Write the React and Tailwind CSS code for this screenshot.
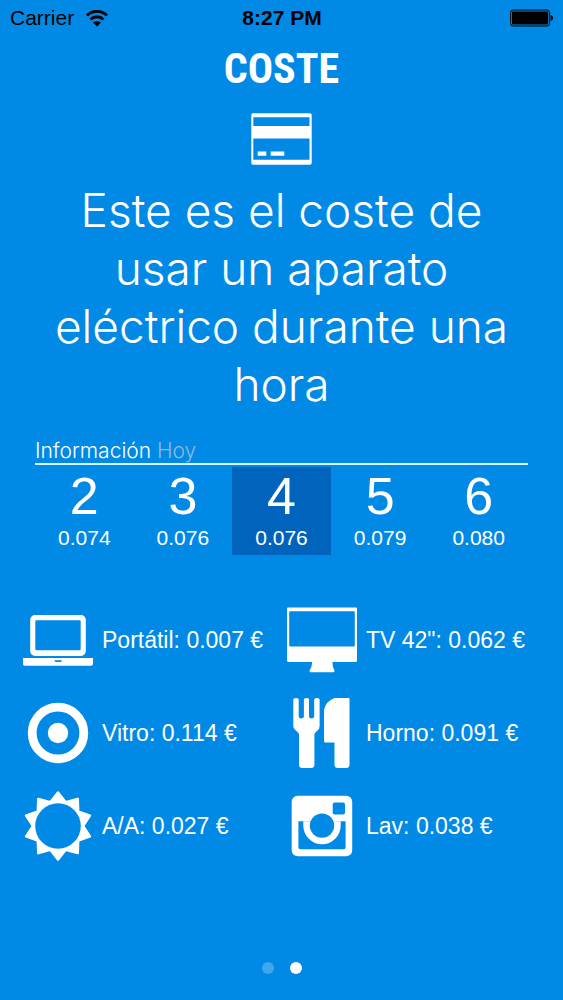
import React, { useState } from "react";

const hours = [
  { hour: 2, price: "0.074" },
  { hour: 3, price: "0.076" },
  { hour: 4, price: "0.076" },
  { hour: 5, price: "0.079" },
  { hour: 6, price: "0.080" },
];

const WifiIcon = () => (
  <svg width="22" height="17" viewBox="0 0 22 17" fill="none" stroke="black" strokeWidth="2.8" aria-hidden="true">
    <path d="M1 5.4a14.2 14.2 0 0 1 20 0" />
    <path d="M4.6 9.4a9 9 0 0 1 12.8 0" />
    <path d="M11 16.5 7 12.6a5.6 5.6 0 0 1 8 0z" fill="black" stroke="none" />
  </svg>
);

const BatteryIcon = () => (
  <svg width="44" height="18" viewBox="0 0 44 18" aria-hidden="true">
    <rect x="0.6" y="1" width="39" height="16" rx="2.5" fill="none" stroke="black" strokeWidth="1" />
    <rect x="2" y="2.5" width="36.2" height="13" rx="1" fill="black" />
    <path d="M40.6 6q2.6 0.6 2.6 3t-2.6 3z" fill="black" />
  </svg>
);

const CardIcon = () => (
  <svg width="61" height="52" viewBox="0 0 61 52" fill="white" aria-hidden="true">
    <path
      fillRule="evenodd"
      d="M2 0.3H59a1.7 1.7 0 0 1 1.7 1.7V50a1.7 1.7 0 0 1-1.7 1.7H2A1.7 1.7 0 0 1 0.3 50V2A1.7 1.7 0 0 1 2 0.3ZM2.3 4.3V13H58.5V4.3ZM2.3 25.6V46.8H58.5V25.6Z"
    />
    <path d="M6.7 38.5h8.6v4.2H6.7zM19.7 38.5h13.6v4.2H19.7z" />
  </svg>
);

// Appliance icons share one 70x70 canvas.
const Icon = ({ children }) => (
  <svg className="shrink-0" width="70" height="70" viewBox="0 0 70 70" fill="white" aria-hidden="true">
    {children}
  </svg>
);

const LaptopIcon = () => (
  <Icon>
    <path
      fillRule="evenodd"
      d="M12 10H58a4.8 4.8 0 0 1 4.8 4.8V46.2A4.8 4.8 0 0 1 58 51H12a4.8 4.8 0 0 1-4.8-4.8V14.8A4.8 4.8 0 0 1 12 10ZM13.5 15.3a1.2 1.2 0 0 0-1.2 1.2V44a1.2 1.2 0 0 0 1.2 1.2H56.5a1.2 1.2 0 0 0 1.2-1.2V16.5a1.2 1.2 0 0 0-1.2-1.2Z"
    />
    <path
      fillRule="evenodd"
      d="M0 53H70V59a1.8 1.8 0 0 1-1.8 1.8H1.8A1.8 1.8 0 0 1 0 59ZM31.5 55.2V56q0.4 1 1.6 1H37.2q1.2 0 1.6-1V55.2Z"
    />
  </Icon>
);

const TvIcon = () => (
  <Icon>
    <path
      fillRule="evenodd"
      d="M1 2.4H69a1 1 0 0 1 1 1V55.5A1.5 1.500 0 0 1 68.5 57H45.4Q45.400 62 47.400 65.2V66.200A1 1 0 0 1 46.4 67.200H23.600A1 1 0 0 1 22.600 66.200V65.200Q25 62 25.200 57H1.500A1.500 1.500 0 0 1 0 55.500V3.400A1 1 0 0 1 1 2.400ZM3.200 6.200a1 1 0 0 0-1 1V40.500a1 1 0 0 0 1 1H66.800a1 1 0 0 0 1-1V7.200a1 1 0 0 0-1-1Z"
    />
  </Icon>
);

const HobIcon = () => (
  <Icon>
    <circle cx="35" cy="35" r="25.8" fill="none" stroke="white" strokeWidth="8.8" />
    <circle cx="35" cy="35" r="10.2" />
  </Icon>
);

const CutleryIcon = () => (
  <Icon>
    <path d="M6.3 1.5Q6.3 0 9 0T11.7 1.5V18.5Q11.7 20.5 14.3 20.5T16.900 18.500V1.500Q16.900 0 19.500 0T22 1.500V18.500Q22 20.500 24.600 20.500T27.200 18.500V1.500Q27.200 0 29.900 0T32.600 1.500V28Q32.600 31 30.500 32.500T27.400 36V66.500A3.500 3.500 0 0 1 23.900 70H15.500A3.500 3.500 0 0 1 12 66.500V36Q10.800 33.800 8.500 32.200T6.300 28Z" />
    <path d="M47.5 0H61.500A1 1 0 0 1 62.500 1V66.500A3.500 3.500 0 0 1 59 70H51A3.500 3.500 0 0 1 47.500 66.500V44.500H38.500A1.500 1.500 0 0 1 37 43V12Q39 3 47.500 0Z" />
  </Icon>
);

// Ten rays: tips and valleys alternate every 18 degrees.
const sunPoints = Array.from({ length: 20 }, (_, i) => {
  const r = i % 2 === 0 ? 33.5 : 25;
  const a = (i * Math.PI) / 10;
  return `${(35 + r * Math.sin(a)).toFixed(1)},${(35 - r * Math.cos(a)).toFixed(1)}`;
}).join(" ");

const SunIcon = () => (
  <Icon>
    <polygon points={sunPoints} stroke="white" strokeWidth="2.5" strokeLinejoin="round" />
    <circle cx="35" cy="35" r="22.8" fill="#008ae6" />
  </Icon>
);

const WasherIcon = () => (
  <Icon>
    <rect x="4.7" y="4.7" width="60.5" height="60.5" rx="6" />
    <rect x="45.7" y="11.5" width="12.3" height="12" rx="2" fill="#008ae6" />
    <path d="M11.4 30.300H58.600V56.500A1.800 1.800 0 0 1 56.800 58.300H13.200A1.800 1.800 0 0 1 11.400 56.500Z" fill="#008ae6" />
    <path d="M16.3 30.200H53.700V34.600A18.700 18.700 0 0 1 16.300 34.600Z" />
    <circle cx="35" cy="34.6" r="12.2" fill="#008ae6" />
  </Icon>
);

const appliances = [
  { name: "Portátil", cost: "0.007 €", icon: LaptopIcon },
  { name: 'TV 42"', cost: "0.062 €", icon: TvIcon },
  { name: "Vitro", cost: "0.114 €", icon: HobIcon },
  { name: "Horno", cost: "0.091 €", icon: CutleryIcon },
  { name: "A/A", cost: "0.027 €", icon: SunIcon },
  { name: "Lav", cost: "0.038 €", icon: WasherIcon },
];

const StatusBar = () => (
  <div className="grid grid-cols-3 items-center h-9 pl-[10px] pr-[9px] text-[21px] leading-9 text-black">
    <div className="flex items-center gap-3">
      <span>Carrier</span>
      <WifiIcon />
    </div>
    <span className="text-center font-bold">8:27 PM</span>
    <div className="flex justify-end">
      <BatteryIcon />
    </div>
  </div>
);

const App = () => {
  const [selected, setSelected] = useState(4);
  const [page, setPage] = useState(1);

  return (
    <div className="flex flex-col min-h-screen bg-[#008ae6] text-white font-['Liberation_Sans',sans-serif]">
      <StatusBar />

      <header className="flex flex-col items-center px-9">
        <h1 className="mt-2 text-[42px] leading-[50px] font-bold font-['Liberation_Sans_Narrow','Roboto_Condensed',sans-serif]">
          COSTE
        </h1>
        <div className="mt-[19px]">
          <CardIcon />
        </div>
        <p className="mt-4 text-center text-[46px] leading-[58px] font-light font-['Inter',sans-serif]">
          Este es el coste de usar un aparato eléctrico durante una hora
        </p>
      </header>

      {/* Hourly price strip */}
      <section className="mt-6 px-[35px]">
        <h2 className="border-b-2 border-[#d9fbff] pt-[2px] text-[21px] leading-[24px] font-light font-['Inter',sans-serif]">
          Información <span className="text-[#8fb9dd]">Hoy</span>
        </h2>
        <div className="mt-[2px] grid grid-cols-5">
          {hours.map(({ hour, price }) => (
            <button
              key={hour}
              type="button"
              aria-pressed={selected === hour}
              onClick={() => setSelected(hour)}
              className={`flex flex-col items-center h-[88px] ${selected === hour ? "bg-[#0064bd]" : ""}`}
            >
              <span className="text-[52px] leading-[58px]">{hour}</span>
              <span className="text-[21px] leading-[26px]">{price}</span>
            </button>
          ))}
        </div>
      </section>

      {/* Cost per appliance */}
      <ul className="mt-[50px] pl-[23px] pr-3 grid grid-cols-2 gap-y-[23px]">
        {appliances.map(({ name, cost, icon: ApplianceIcon }) => (
          <li key={name} className="flex items-center gap-[9px] text-[23px] leading-[28px] whitespace-nowrap">
            <ApplianceIcon />
            <span>
              {name}: {cost}
            </span>
          </li>
        ))}
      </ul>

      <nav className="mt-auto pb-[26px] flex justify-center gap-4">
        {[0, 1].map((i) => (
          <button
            key={i}
            type="button"
            aria-label={`Página ${i + 1}`}
            onClick={() => setPage(i)}
            className={`size-3 rounded-full ${page === i ? "bg-white" : "bg-[#40a7ed]"}`}
          />
        ))}
      </nav>
    </div>
  );
};

export default App;
